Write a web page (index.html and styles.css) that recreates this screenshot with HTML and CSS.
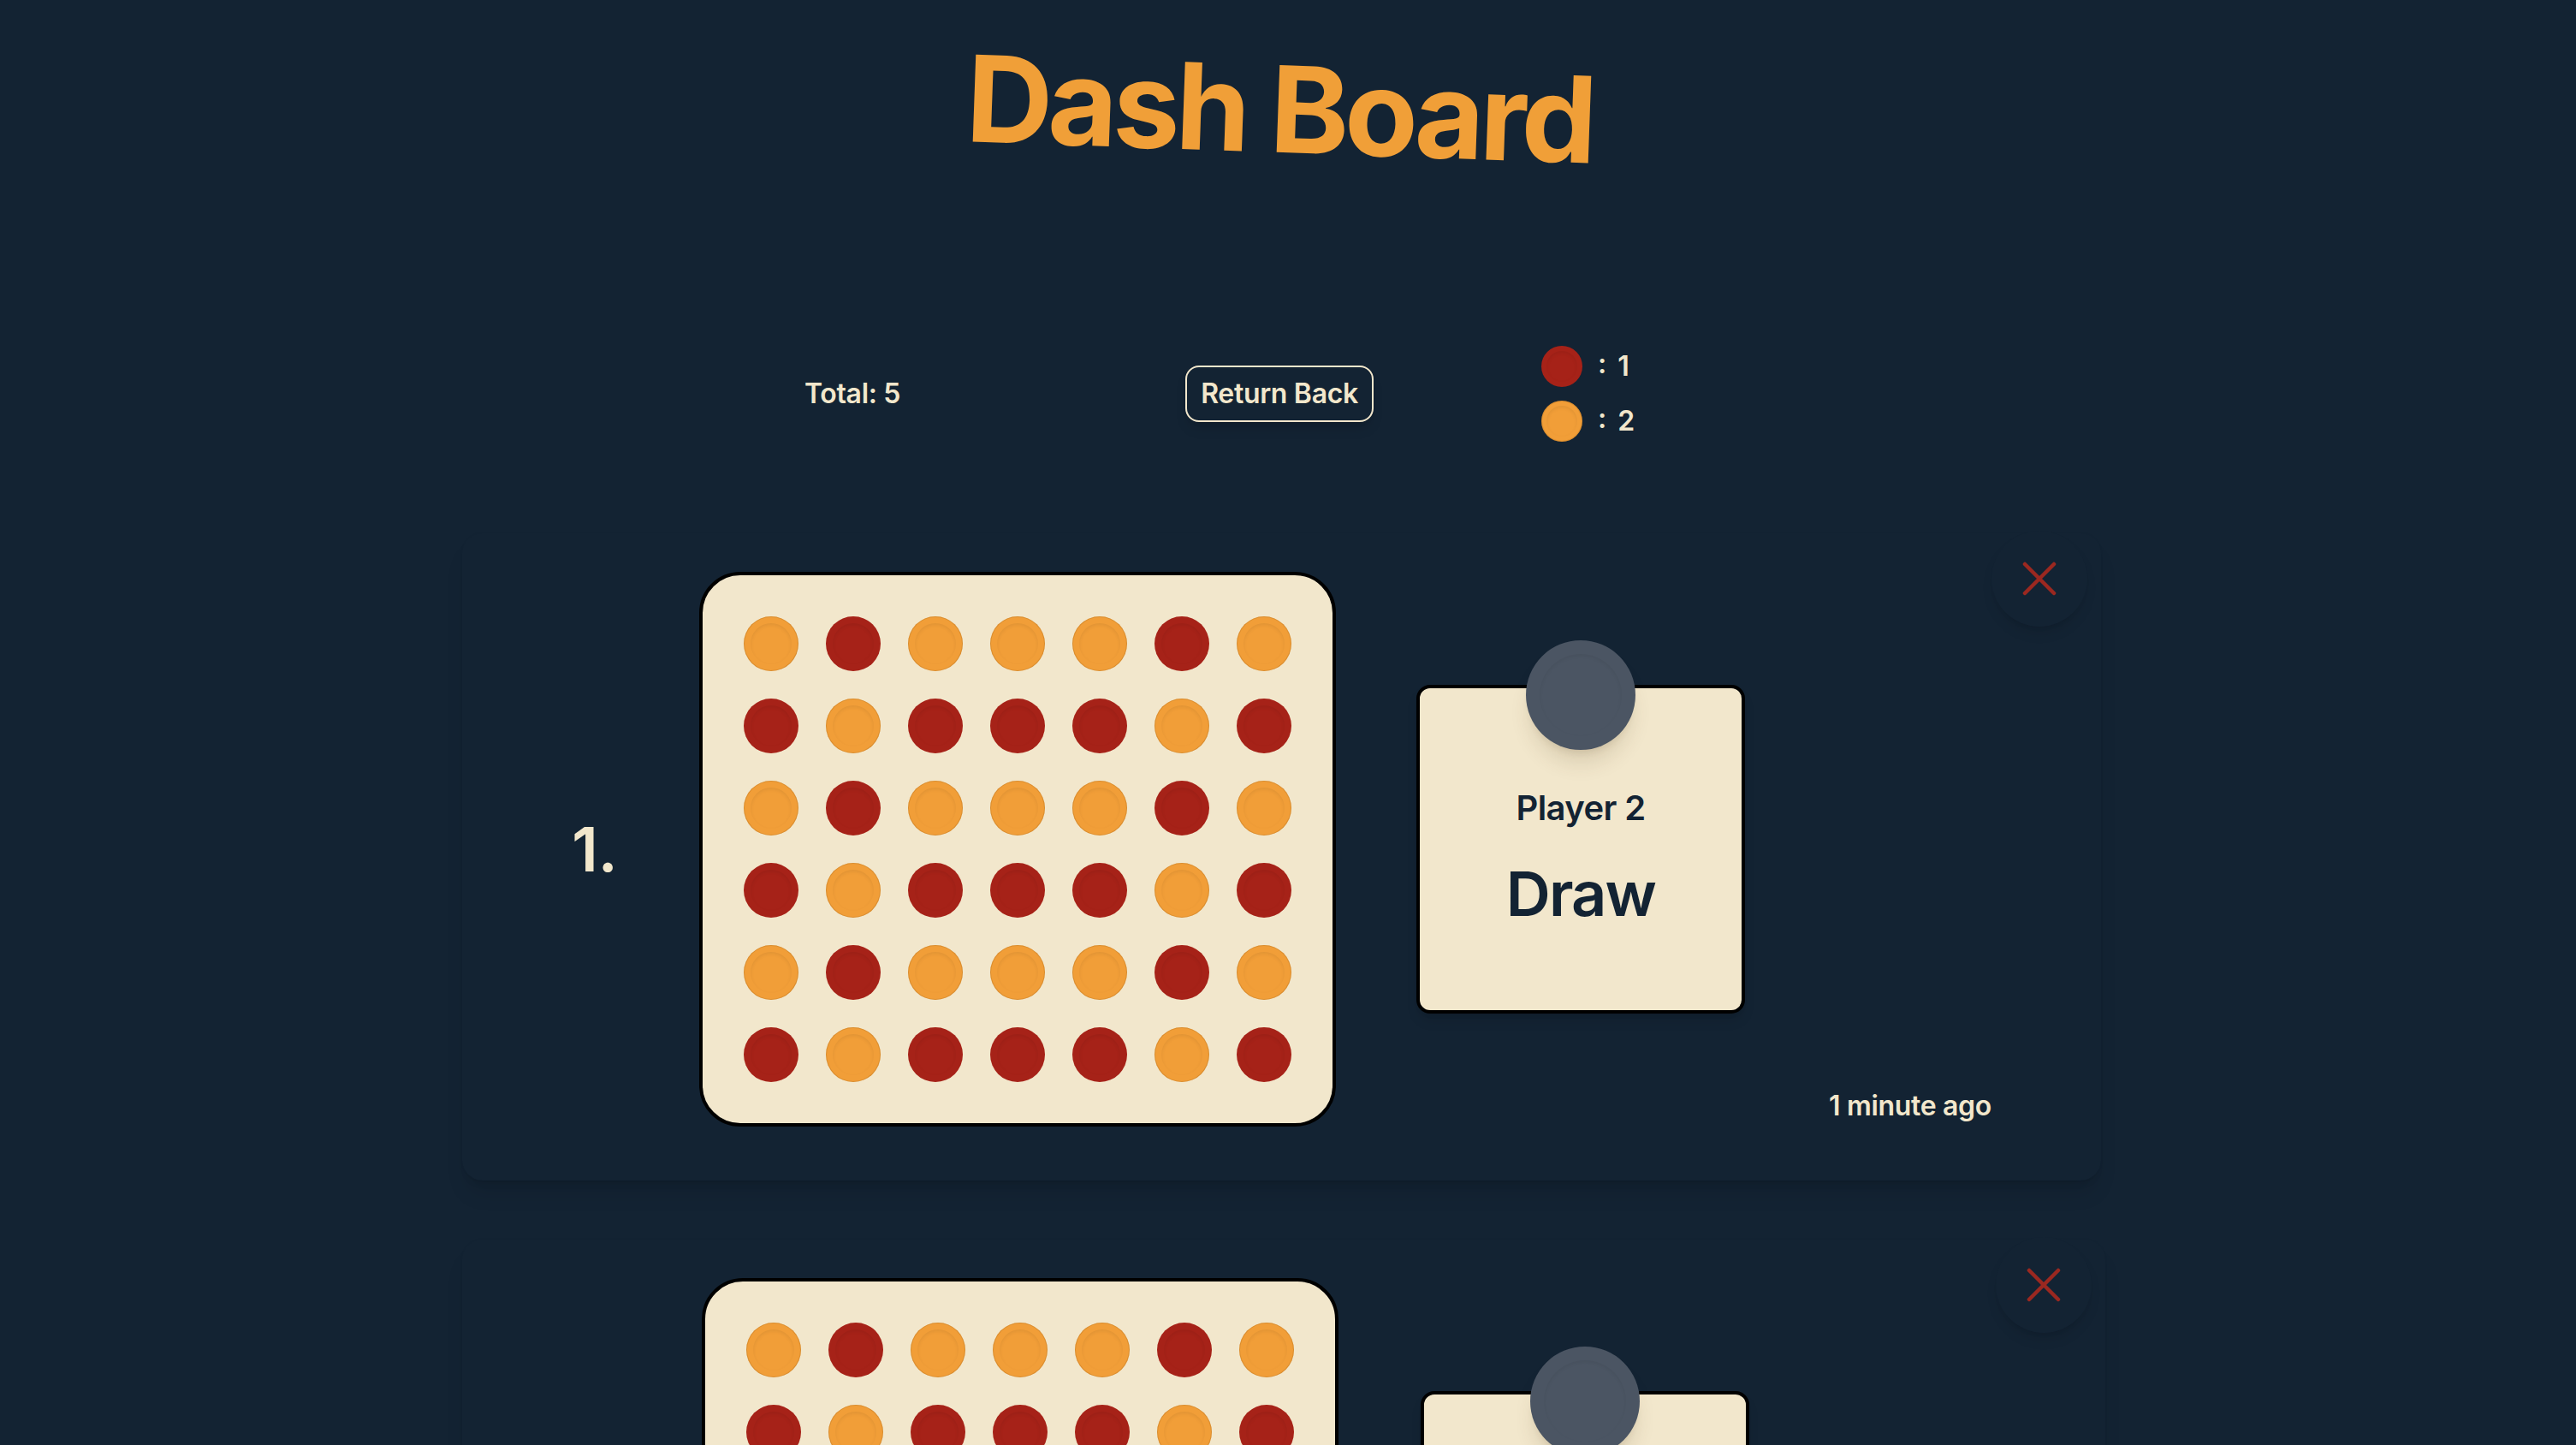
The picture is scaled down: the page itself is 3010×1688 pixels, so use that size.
FILE: index.html
```html
<!DOCTYPE html>
<html lang="en">
<head>
<meta charset="utf-8">
<title>Dash Board</title>
<link rel="stylesheet" href="styles.css">
</head>
<body>
<header class="header">
  <h1 class="title">Dash Board</h1>
</header>

<section class="stats">
  <div class="total">Total: 5</div>
  <button class="return">Return Back</button>
  <div class="legend">
    <div class="legend-row"><span class="disc r"></span><span>: 1</span></div>
    <div class="legend-row"><span class="disc o"></span><span>: 2</span></div>
  </div>
</section>

<main class="games">
  <article class="game">
    <div class="label">1.</div>
    <div class="board">
      <i class="c o"></i><i class="c r"></i><i class="c o"></i><i class="c o"></i><i class="c o"></i><i class="c r"></i><i class="c o"></i>
      <i class="c r"></i><i class="c o"></i><i class="c r"></i><i class="c r"></i><i class="c r"></i><i class="c o"></i><i class="c r"></i>
      <i class="c o"></i><i class="c r"></i><i class="c o"></i><i class="c o"></i><i class="c o"></i><i class="c r"></i><i class="c o"></i>
      <i class="c r"></i><i class="c o"></i><i class="c r"></i><i class="c r"></i><i class="c r"></i><i class="c o"></i><i class="c r"></i>
      <i class="c o"></i><i class="c r"></i><i class="c o"></i><i class="c o"></i><i class="c o"></i><i class="c r"></i><i class="c o"></i>
      <i class="c r"></i><i class="c o"></i><i class="c r"></i><i class="c r"></i><i class="c r"></i><i class="c o"></i><i class="c r"></i>
    </div>
    <div class="player">
      <div class="avatar"></div>
      <div class="pname">Player 2</div>
      <div class="result">Draw</div>
    </div>
    <div class="time">1 minute ago</div>
    <button class="close" aria-label="Delete">
      <svg width="40" height="40" viewBox="0 0 40 40"><path d="M3 3L37 37M37 3L3 37" stroke="#9b2820" stroke-width="4.5" stroke-linecap="round" fill="none"/></svg>
    </button>
  </article>

  <article class="game game-shift">
    <div class="label">2.</div>
    <div class="board">
      <i class="c o"></i><i class="c r"></i><i class="c o"></i><i class="c o"></i><i class="c o"></i><i class="c r"></i><i class="c o"></i>
      <i class="c r"></i><i class="c o"></i><i class="c r"></i><i class="c r"></i><i class="c r"></i><i class="c o"></i><i class="c r"></i>
      <i class="c o"></i><i class="c r"></i><i class="c o"></i><i class="c o"></i><i class="c o"></i><i class="c r"></i><i class="c o"></i>
      <i class="c r"></i><i class="c o"></i><i class="c r"></i><i class="c r"></i><i class="c r"></i><i class="c o"></i><i class="c r"></i>
      <i class="c o"></i><i class="c r"></i><i class="c o"></i><i class="c o"></i><i class="c o"></i><i class="c r"></i><i class="c o"></i>
      <i class="c r"></i><i class="c o"></i><i class="c r"></i><i class="c r"></i><i class="c r"></i><i class="c o"></i><i class="c r"></i>
    </div>
    <div class="player">
      <div class="avatar"></div>
      <div class="pname">Player 2</div>
      <div class="result">Draw</div>
    </div>
    <div class="time">2 minutes ago</div>
    <button class="close" aria-label="Delete">
      <svg width="40" height="40" viewBox="0 0 40 40"><path d="M3 3L37 37M37 3L3 37" stroke="#9b2820" stroke-width="4.5" stroke-linecap="round" fill="none"/></svg>
    </button>
  </article>
</main>
</body>
</html>
```
FILE: styles.css
```css
* { box-sizing: border-box; }
html, body { margin: 0; }
body {
  background: #132333;
  color: #f2e7cc;
  font-family: Inter, "Noto Sans", "Liberation Sans", sans-serif;
}

.header {
  display: flex;
  justify-content: center;
  padding-top: 57px;
}
.title {
  margin: 0;
  font-size: 140px;
  line-height: 140px;
  font-weight: 700;
  letter-spacing: -0.037em;
  color: #f09f38;
  transform: translateX(-10px) rotate(2deg);
}

.stats {
  display: flex;
  align-items: center;
  margin-top: 207px;
  padding-left: 940px;
}
.total {
  font-size: 32px;
  line-height: 48px;
  font-weight: 600;
  letter-spacing: -0.01em;
}
.return {
  margin-left: 333px;
  font: 600 32px/48px Inter, "Noto Sans", sans-serif;
  letter-spacing: -0.01em;
  color: #f2e7cc;
  background: transparent;
  border: 2px solid #f2e7cc;
  border-radius: 16px;
  padding: 7px 16px;
  box-shadow: 0 10px 15px -3px rgba(0,0,0,.12), 0 4px 6px -4px rgba(0,0,0,.12);
}
.legend {
  margin-left: 196px;
  display: flex;
  flex-direction: column;
  gap: 16px;
}
.legend-row {
  display: flex;
  align-items: center;
  gap: 18px;
  font-size: 32px;
  line-height: 48px;
  font-weight: 600;
  word-spacing: 5px;
}
.disc {
  width: 48px;
  height: 48px;
  border-radius: 50%;
  position: relative;
}
.disc::after {
  content: "";
  position: absolute;
  inset: 6px;
  border-radius: 50%;
  box-shadow: inset 0 2px 4px rgba(0,0,0,.07);
}

.games {
  width: 1915px;
  margin: 107px 0 0 540px;
  display: flex;
  flex-direction: column;
  gap: 69px;
  padding-bottom: 120px;
}
.game {
  position: relative;
  display: flex;
  align-items: center;
  padding: 45px 0 63px 100px;
  border-radius: 24px;
  box-shadow: 0 0 3px rgba(0,0,0,.05), 0 20px 25px -5px rgba(0,0,0,.1), 0 8px 10px -6px rgba(0,0,0,.1);
}
.game-shift {
  padding-left: 103px;
  margin-right: -5px;
}
.label {
  width: 110px;
  text-align: center;
  font-size: 72px;
  line-height: 80px;
  font-weight: 600;
}
.board {
  margin-left: 67px;
  background: #f2e7cc;
  border: 4px solid #000;
  border-radius: 48px;
  padding: 48px;
  display: grid;
  grid-template-columns: repeat(7, 64px);
  grid-auto-rows: 64px;
  gap: 32px;
}
.c {
  display: block;
  width: 64px;
  height: 64px;
  border-radius: 50%;
  position: relative;
}
.c::after {
  content: "";
  position: absolute;
  inset: 8px;
  border-radius: 50%;
  box-shadow: inset 0 2px 4px rgba(0,0,0,.07);
}
.o { background: #f19e38; box-shadow: inset 0 0 0 1px rgba(150,90,20,.25); }
.r { background: #a62218; }

.player {
  margin-left: 94px;
  width: 384px;
  height: 384px;
  flex: none;
  background: #f2e7cc;
  border: 4px solid #000;
  border-radius: 16px;
  display: flex;
  flex-direction: column;
  align-items: center;
  color: #132333;
  box-shadow: 0 10px 15px -3px rgba(0,0,0,.12), 0 4px 6px -4px rgba(0,0,0,.12);
}
.game-shift .player { margin-left: 96px; }
.avatar {
  flex: none;
  position: relative;
  width: 128px;
  height: 128px;
  margin-top: -56px;
  border-radius: 50%;
  background: #4b5563;
  box-shadow: 0 20px 25px -5px rgba(80,60,20,.14), 0 8px 10px -6px rgba(80,60,20,.14);
}
.avatar::after {
  content: "";
  position: absolute;
  inset: 16px;
  border-radius: 50%;
  box-shadow: inset 0 2px 4px rgba(0,0,0,.06);
}
.pname {
  margin-top: 40px;
  font-size: 40px;
  line-height: 56px;
  font-weight: 600;
  letter-spacing: -0.015em;
}
.result {
  margin-top: 32px;
  font-size: 72px;
  line-height: 80px;
  font-weight: 600;
  letter-spacing: -0.025em;
}
.time {
  margin-left: 98px;
  align-self: flex-end;
  font-size: 32px;
  line-height: 48px;
  font-weight: 600;
  letter-spacing: -0.01em;
  white-space: nowrap;
}
.close {
  position: absolute;
  top: -3px;
  right: 16px;
  width: 112px;
  height: 112px;
  padding: 0;
  border: 0;
  border-radius: 50%;
  background: #132333;
  display: flex;
  align-items: center;
  justify-content: center;
  box-shadow: 0 10px 15px -3px rgba(0,0,0,.1), 0 4px 6px -4px rgba(0,0,0,.1);
}
.close svg { width: 40px; height: 40px; }
```
